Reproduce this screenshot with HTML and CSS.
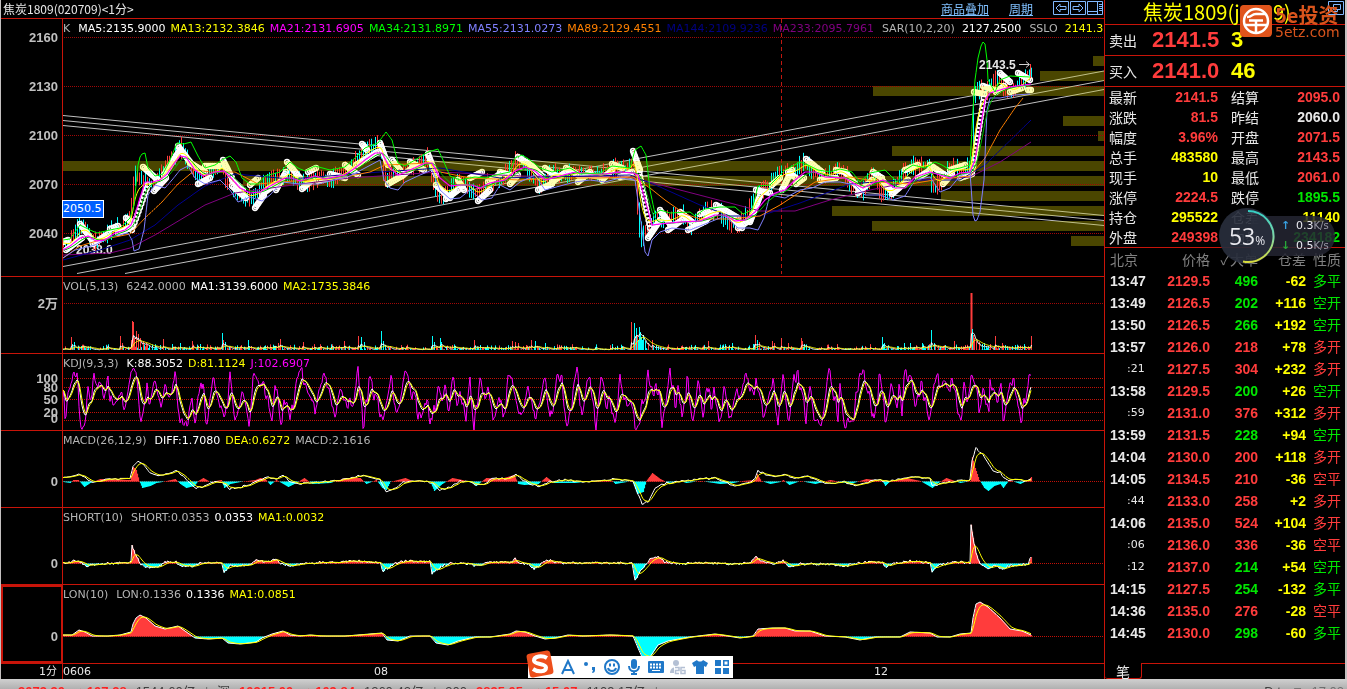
FILE: index.html
```html
<!DOCTYPE html>
<html lang="zh-CN">
<head>
    <meta charset="UTF-8">
    <meta name="viewport" content="width=device-width, initial-scale=1.0">
    <title>焦炭1809</title>
    <link rel="stylesheet" href="styles.css">
</head>
<body>
    <main class="app">
        <section class="charts">
            <header class="topbar">
                <h1>焦炭1809(020709)&lt;1分&gt;</h1>
                <nav>
                    <a href="#">商品叠加</a>
                    <a href="#">周期</a>
                    <div class="winbtns">
                        <button aria-label="左移"><svg viewBox="0 0 16 14"><path d="M.5.5h15v13H.5zM3 7l4-4v2.500h6v3H7V11z"/></svg></button>
                        <button aria-label="右移"><svg viewBox="0 0 16 14"><path d="M.5.5h15v13H.5zM13 7L9 3v2.500H3v3h6V11z"/></svg></button>
                        <button aria-label="布局"><svg viewBox="0 0 16 14"><path d="M.5.5h15v13H.5zM.5 10.500h10M10.500.5v13M12 3.500h3M12 5.500h3M12 7.500h3M12 9.500h3"/></svg></button>
                    </div>
                </nav>
            </header>

            <div class="panel main">
                <svg class="axis" id="axis-k"></svg>
                <div class="plot">
                    <svg id="k" viewBox="63 19 1041 257" preserveAspectRatio="none"></svg>
                    <p class="legend"><span class="gray k">K</span><span>MA5:2135.9000</span><span class="yellow">MA13:2132.3846</span><span class="magenta">MA21:2131.6905</span><span class="green">MA34:2131.8971</span><span class="blue">MA55:2131.0273</span><span class="orange">MA89:2129.4551</span><span class="navy">MA144:2109.9236</span><span class="purple">MA233:2095.7961</span><span class="gray sp">SAR(10,2,20)</span><span>2127.2500</span><span class="gray sp">SSLO</span><span class="yellow">2141.3</span></p>
                </div>
                <span class="cursor-price">2050.5</span>
            </div>

            <div class="panel">
                <svg class="axis" id="axis-vol"></svg>
                <div class="plot">
                    <svg id="vol" viewBox="63 277 1041 76" preserveAspectRatio="none"></svg>
                    <p class="legend"><span class="gray">VOL(5,13)</span><span class="gray">6242.0000</span><span>MA1:3139.6000</span><span class="yellow">MA2:1735.3846</span></p>
                </div>
            </div>

            <div class="panel">
                <svg class="axis" id="axis-kdj"></svg>
                <div class="plot">
                    <svg id="kdj" viewBox="63 354 1041 76" preserveAspectRatio="none"></svg>
                    <p class="legend"><span class="gray">KDJ(9,3,3)</span><span>K:88.3052</span><span class="yellow">D:81.1124</span><span class="magenta">J:102.6907</span></p>
                </div>
            </div>

            <div class="panel">
                <svg class="axis" id="axis-macd"></svg>
                <div class="plot">
                    <svg id="macd" viewBox="63 431 1041 76" preserveAspectRatio="none"></svg>
                    <p class="legend"><span class="gray">MACD(26,12,9)</span><span>DIFF:1.7080</span><span class="yellow">DEA:0.6272</span><span class="gray">MACD:2.1616</span></p>
                </div>
            </div>

            <div class="panel">
                <svg class="axis" id="axis-short"></svg>
                <div class="plot">
                    <svg id="short" viewBox="63 508 1041 76" preserveAspectRatio="none"></svg>
                    <p class="legend"><span class="gray">SHORT(10)</span><span class="gray">SHORT:0.0353</span><span>0.0353</span><span class="yellow">MA1:0.0032</span></p>
                </div>
            </div>

            <div class="panel selected">
                <svg class="axis" id="axis-lon"></svg>
                <div class="plot">
                    <svg id="lon" viewBox="63 585 1041 78" preserveAspectRatio="none"></svg>
                    <p class="legend"><span class="gray">LON(10)</span><span class="gray">LON:0.1336</span><span>0.1336</span><span class="yellow">MA1:0.0851</span></p>
                </div>
            </div>

            <div class="timeline">
                <span class="period">1分</span>
                <div class="days"><span>0606</span><span>08</span><span>12</span></div>
            </div>

            <div class="ime">
                <svg class="sogou" viewBox="0 0 28 28"><rect x="2" y="2" width="24" height="24" rx="3" fill="#ee4f1c" transform="rotate(-10 14 14)"/><path d="M21 8C16 5 8 6 8 10.500s12 2.500 12 7-8 5-13 1.500" fill="none" stroke="#fff" stroke-width="4"/></svg>
                <button aria-label="英文"><svg viewBox="0 0 16 16"><path d="M2 15L8 2l6 13M4.500 11h7" class="line"/></svg></button>
                <button aria-label="标点"><svg viewBox="0 0 16 16"><circle cx="4" cy="5" r="2"/><path d="M10 8h3v3c0 2-1 3-3 3l1-3h-1z"/></svg></button>
                <button aria-label="表情"><svg viewBox="0 0 16 16"><circle cx="8" cy="8" r="7" class="line"/><path d="M4 9c1 4 7 4 8 0M6 4.500v3M10 4.500v3" class="line"/></svg></button>
                <button aria-label="语音"><svg viewBox="0 0 16 16"><rect x="5" y="0" width="6" height="10" rx="3"/><path d="M3 7c0 7 10 7 10 0M8 12v3M5 15h6" class="line"/></svg></button>
                <button aria-label="键盘"><svg viewBox="0 0 16 16"><rect x="0" y="2" width="16" height="12" rx="1"/><path d="M2 5.500h12M2 8.500h12" stroke="#fff" stroke-width="2" stroke-dasharray="2 1"/><path d="M4 11.500h8" stroke="#fff" stroke-width="1"/></svg></button>
                <button aria-label="皮肤账号" class="off"><svg viewBox="0 0 16 16"><circle cx="6" cy="4" r="3"/><path d="M0 14c0-8 12-8 12 0z"/><path d="M4 7h12v9H4z" fill="#fff"/><path d="M5 8.500h4v3H5.500v3H9M15 8.500h-4v6h4v-3h-3" stroke="#b4c0d4" stroke-width="1.500" fill="none"/></svg></button>
                <button aria-label="换肤"><svg viewBox="0 0 16 16"><path d="M5 1c1 2 5 2 6 0l5 3-2 4-2-1v8H4V7L2 8 0 4z"/></svg></button>
                <button aria-label="工具箱"><svg viewBox="0 0 16 16"><path d="M1 1h6v6H1zM1 9h6v6H1zM9 9h6v6H9z"/><path d="M9.750 1.750h4.500v4.500h-4.500z" class="line thin"/></svg></button>
            </div>
        </section>

        <aside class="quote">
            <h2>焦炭1809(j1809)</h2>
            <div class="bidask"><span>卖出</span><b class="red">2141.5</b><b class="yellow">3</b></div>
            <div class="bidask"><span>买入</span><b class="red">2141.0</b><b class="yellow">46</b></div>

            <table class="stats">
                <tr><th>最新</th><td class="red">2141.5</td><th>结算</th><td class="red">2095.0</td></tr>
                <tr><th>涨跌</th><td class="red">81.5</td><th>昨结</th><td>2060.0</td></tr>
                <tr><th>幅度</th><td class="red">3.96%</td><th>开盘</th><td class="red">2071.5</td></tr>
                <tr><th>总手</th><td class="yellow">483580</td><th>最高</th><td class="red">2143.5</td></tr>
                <tr><th>现手</th><td class="yellow">10</td><th>最低</th><td class="red">2061.0</td></tr>
                <tr><th>涨停</th><td class="red">2224.5</td><th>跌停</th><td class="lime">1895.5</td></tr>
                <tr><th>持仓</th><td class="yellow">295522</td><th>仓差</th><td class="yellow">11140</td></tr>
                <tr><th>外盘</th><td class="red">249398</td><th>内盘</th><td class="lime">234182</td></tr>
            </table>

            <table class="ticks">
                <thead>
                    <tr><th>北京</th><th>价格</th><th>✓大单</th><th>仓差</th><th>性质</th></tr>
                </thead>
                <tbody>
                    <tr><td>13:47</td><td>2129.5</td><td class="lime">496</td><td>-62</td><td class="lime">多平</td></tr>
                    <tr><td>13:49</td><td>2126.5</td><td class="lime">202</td><td>+116</td><td class="lime">空开</td></tr>
                    <tr><td>13:50</td><td>2126.5</td><td class="lime">266</td><td>+192</td><td class="lime">空开</td></tr>
                    <tr><td>13:57</td><td>2126.0</td><td class="red">218</td><td>+78</td><td class="red">多开</td></tr>
                    <tr><td class="sec">:21</td><td>2127.5</td><td class="red">304</td><td>+232</td><td class="red">多开</td></tr>
                    <tr><td>13:58</td><td>2129.5</td><td class="lime">200</td><td>+26</td><td class="lime">空开</td></tr>
                    <tr><td class="sec">:59</td><td>2131.0</td><td class="red">376</td><td>+312</td><td class="red">多开</td></tr>
                    <tr><td>13:59</td><td>2131.5</td><td class="lime">228</td><td>+94</td><td class="lime">空开</td></tr>
                    <tr><td>14:04</td><td>2130.0</td><td class="red">200</td><td>+118</td><td class="red">多开</td></tr>
                    <tr><td>14:05</td><td>2134.5</td><td class="red">210</td><td>-36</td><td class="red">空平</td></tr>
                    <tr><td class="sec">:44</td><td>2133.0</td><td class="red">258</td><td>+2</td><td class="red">多开</td></tr>
                    <tr><td>14:06</td><td>2135.0</td><td class="red">524</td><td>+104</td><td class="red">多开</td></tr>
                    <tr><td class="sec">:06</td><td>2136.0</td><td class="red">336</td><td>-36</td><td class="red">空平</td></tr>
                    <tr><td class="sec">:12</td><td>2137.0</td><td class="lime">214</td><td>+54</td><td class="lime">空开</td></tr>
                    <tr><td>14:15</td><td>2127.5</td><td class="lime">254</td><td>-132</td><td class="lime">多平</td></tr>
                    <tr><td>14:36</td><td>2135.0</td><td class="red">276</td><td>-28</td><td class="red">空平</td></tr>
                    <tr><td>14:45</td><td>2130.0</td><td class="lime">298</td><td>-60</td><td class="lime">多平</td></tr>
                </tbody>
            </table>
            <div class="tabs"><button>笔</button><i></i></div>

            <button class="restore" aria-label="还原"><svg viewBox="0 0 16 14"><path d="M.5.5h15v13H.5zM5.500 3.500h7v5h-7zM5.500 6.500h-3v4h7v-2"/></svg></button>
            <div class="brand">
                <svg viewBox="0 0 32 32"><rect width="32" height="32" rx="4" fill="#e0541b"/><g fill="none" stroke="#fff" stroke-width="2.500"><circle cx="16" cy="16" r="12"/><path d="M7 12c6 0 4-3 9-3h9M9 15.500h14M16 15v12M5 20h22"/></g></svg>
                <p><strong>5e投资</strong><small>5etz.com</small></p>
            </div>
            <div class="meter">
                <div class="speed">
                    <span><i class="up">↑</i>0.3<small>K/s</small></span>
                    <span><i class="down">↓</i>0.5<small>K/s</small></span>
                </div>
                <div class="ball">
                    <svg viewBox="0 0 56 56">
                        <defs><linearGradient id="ring" x1="0" y1="0" x2="0" y2="1"><stop offset="0" stop-color="#35cfc4"/><stop offset=".5" stop-color="#7fd8a8"/><stop offset="1" stop-color="#d8dc3c"/></linearGradient></defs>
                        <path d="M29 3A25.500 25.500 0 1 1 24 53.500" fill="none" stroke="url(#ring)" stroke-width="2"/>
                    </svg>
                    <span>53<small>%</small></span>
                </div>
            </div>
        </aside>
    </main>

    <footer class="indexbar">
        <p><b>3073.30</b><b>▲107.28</b><span>1544.60亿</span><i>|</i><span>深</span><b>10315.00</b><b>▲109.84</b><span>1260.42亿</span><i>|</i><span>300</span><b>3835.05</b><b>▲15.07</b><span>1109.17亿</span><i>|</i></p>
        <p><span>D.t.</span><span>⧗</span><time>17:03</time></p>
    </footer>
    <script src="chart.js"></script>
</body>
</html>
```
FILE: styles.css
```css
* {
    box-sizing: border-box;
}
body {
    margin: 0;
    height: 100vh;
    display: flex;
    flex-direction: column;
    overflow: hidden;
    background: #c4c0c0;
    color: #e8e8e8;
    font: 12px/18px "DejaVu Sans", "Noto Sans CJK SC", sans-serif;
}
h1, h2, p {
    margin: 0;
    font-weight: normal;
}
button {
    padding: 0;
    border: 0;
    background: none;
    color: inherit;
    font: inherit;
    cursor: pointer;
}
svg {
    display: block;
}

.gray { color: #b4b4b4; }
.yellow { color: #ffff00; }
.magenta { color: #ff00ff; }
.green { color: #00ff00; }
.lime { color: #00e600; }
.blue { color: #8080ff; }
.orange { color: #ff8000; }
.navy { color: #000080; }
.purple { color: #800080; }
.red { color: #ff3c3c; }

.app {
    display: flex;
    flex: none;
    margin: 0 2px 0 1px;
    background: #000;
}

/* left side: stacked charts */
.charts {
    position: relative;
    flex: 1;
    min-width: 0;
    border-right: 1px solid #c81409;
}
.topbar {
    display: flex;
    justify-content: space-between;
    height: 19px;
    border-bottom: 1px solid #c81409;
    font-family: "Noto Sans CJK SC", sans-serif;
}
.topbar h1 {
    padding-left: 2px;
    font-size: 12px;
    line-height: 17px;
}
.topbar nav {
    display: flex;
    gap: 20px;
    padding-right: 1px;
    line-height: 17px;
}
.topbar a {
    color: #80c0ff;
}
.winbtns {
    display: flex;
    gap: 1px;
    padding: 1px 0;
}
.winbtns button, .restore {
    width: 16px;
    height: 14px;
}
.winbtns path, .restore path {
    fill: none;
    stroke: #80b8ff;
}

.panel {
    position: relative;
    display: flex;
    height: 77px;
    border-bottom: 1px solid #c81409;
}
.panel.main {
    height: 258px;
}
.panel.selected {
    height: 79px;
}
.axis {
    flex: none;
    width: 62px;
    height: 100%;
    border-right: 1px solid #c81409;
    fill: #c0c0c0;
    font: bold 13px "Liberation Sans", "Noto Sans CJK SC", sans-serif;
}
.selected .axis {
    outline: 2px solid #c81409;
    outline-offset: -2px;
}
.plot {
    position: relative;
    flex: 1;
    min-width: 0;
    overflow: hidden;
}
.plot svg {
    width: 100%;
    height: 100%;
}
.plot text {
    fill: #e8e8e8;
    font: bold 12px "Liberation Sans", sans-serif;
}
.legend {
    position: absolute;
    top: 0;
    left: 0;
    display: flex;
    gap: 5px;
    color: #fff;
    font-size: 11px;
    line-height: 19px;
    white-space: nowrap;
}
.legend span:first-child {
    padding-right: 3px;
}
.legend .sp {
    padding: 0 2px 0 3px;
}
.cursor-price {
    position: absolute;
    top: 181px;
    left: 61px;
    padding-right: 1px;
    border: 1px solid #fff;
    background: #0060ff;
    color: #fff;
    font-size: 11px;
    line-height: 16px;
}
.timeline {
    display: flex;
    height: 15px;
    font-size: 11px;
    line-height: 15px;
}
.period {
    width: 62px;
    padding-right: 5px;
    border-right: 1px solid #c81409;
    text-align: right;
}
.days {
    flex: 1;
    display: grid;
    grid-template-columns: 311fr 500fr 230fr;
}

/* input method bar */
.ime {
    position: absolute;
    bottom: 1px;
    left: 527px;
    display: flex;
    align-items: center;
    gap: 6px;
    height: 22px;
    padding-right: 3px;
    background: #fff;
}
.ime .sogou {
    width: 28px;
    height: 28px;
    margin: -6px 0 0 -2px;
    flex: none;
}
.ime button {
    width: 16px;
    height: 16px;
}
.ime button svg {
    width: 16px;
    height: 16px;
    fill: #2078c8;
}
.ime .line {
    fill: none;
    stroke: #2078c8;
    stroke-width: 2;
}
.ime .thin {
    stroke-width: 1.5;
}
.ime .off svg {
    fill: #b4c0d4;
}

/* right side: quote board */
.quote {
    position: relative;
    display: flex;
    flex-direction: column;
    flex: none;
    width: 240px;
    font-family: "Noto Sans CJK SC", sans-serif;
    font-size: 14px;
}
.quote h2 {
    height: 25px;
    padding-left: 38px;
    border-bottom: 1px solid #c81409;
    color: #ffff00;
    font-size: 20px;
    line-height: 24px;
}
.bidask {
    display: grid;
    grid-template-columns: 43px 79px 1fr;
    padding-left: 4px;
    border-bottom: 1px solid #c81409;
    line-height: 30px;
}
.bidask b {
    font: bold 22px/30px "Liberation Sans", sans-serif;
}
table {
    width: 100%;
    border-collapse: collapse;
    table-layout: fixed;
}
th {
    padding: 0;
    font-weight: normal;
    text-align: left;
}
td {
    padding: 0;
    text-align: right;
    font-family: "Liberation Sans", "Noto Sans CJK SC", sans-serif;
    font-weight: bold;
}
.stats {
    border-bottom: 1px solid #c81409;
    line-height: 20px;
}
.stats th:nth-child(1) { width: 36px; padding-left: 4px; }
.stats td:nth-child(2) { width: 77px; }
.stats th:nth-child(3) { width: 55px; padding-left: 13px; }
.stats td:nth-child(4) { padding-right: 5px; }

.ticks {
    line-height: 22px;
}
.ticks th {
    color: #808080;
    text-align: right;
    white-space: nowrap;
}
.ticks th:nth-child(1) { width: 45px; padding-left: 5px; text-align: left; }
.ticks th:nth-child(2) { width: 60px; }
.ticks th:nth-child(3) { width: 48px; }
.ticks th:nth-child(4) { width: 48px; }
.ticks td:nth-child(1) { padding-left: 5px; text-align: left; }
.ticks td:nth-child(2) { color: #ff3c3c; }
.ticks td:nth-child(4) { color: #ffff00; }
.ticks th:nth-child(5), .ticks td:nth-child(5) { padding-right: 4px; font-weight: normal; }
.ticks td.sec {
    padding-left: 22px;
    font: 11px/22px "DejaVu Sans", sans-serif;
}
.tabs {
    display: flex;
    height: 16px;
    margin-top: auto;
}
.tabs button {
    width: 37px;
    border: 1px solid #c81409;
    border-width: 0 1px 1px 0;
    border-radius: 0 0 3px 3px;
    line-height: 14px;
}
.tabs i {
    flex: 1;
    border-top: 1px solid #c81409;
}
.restore {
    position: absolute;
    top: 1px;
    right: 1px;
}
.brand {
    position: absolute;
    top: 5px;
    right: 4px;
    display: flex;
    gap: 3px;
    color: #d8541c;
}
.brand > svg {
    width: 32px;
    height: 32px;
}
.brand p {
    display: flex;
    flex-direction: column;
    width: 66px;
    white-space: nowrap;
}
.brand strong {
    font: bold 20px/20px "Noto Sans CJK SC", sans-serif;
}
.brand small {
    font: 14px/14px "DejaVu Sans", sans-serif;
}

/* network meter that floats over the board */
.meter {
    position: absolute;
    top: 208px;
    left: 114px;
    display: flex;
    align-items: center;
    color: #e8e8ee;
}
.ball {
    position: relative;
    width: 56px;
    height: 56px;
    border-radius: 50%;
    background: rgba(40, 46, 60, .92);
    font: 23px/56px "Open Sans", sans-serif;
    text-align: center;
}
.ball svg {
    position: absolute;
    inset: 0;
}
.ball small {
    font-size: 12px;
}
.speed {
    order: 1;
    width: 84px;
    margin-left: -24px;
    padding-left: 30px;
    border-radius: 0 20px 20px 0;
    background: rgba(36, 38, 50, .85);
    font: 11px/20px "DejaVu Sans", sans-serif;
}
.speed span {
    display: flex;
    white-space: nowrap;
}
.speed i {
    width: 15px;
    font-style: normal;
    font-weight: bold;
}
.speed small {
    color: #9a9aa6;
    font-size: 10px;
}
.speed .up { color: #38a0e0; }
.speed .down { color: #28a838; }

/* index strip */
.indexbar {
    display: flex;
    flex: 1;
    justify-content: space-between;
    min-height: 0;
    padding: 4px 3px 0 18px;
    overflow: hidden;
    background: linear-gradient(#d0d0d0, #b0b0b0);
    color: #404040;
    font: bold 13px/18px "Liberation Sans", "Noto Sans CJK SC", sans-serif;
}
.indexbar p {
    display: flex;
    gap: 9px;
}
.indexbar b {
    color: #ff2020;
}
.indexbar i, .indexbar time {
    color: #707070;
    font-weight: normal;
}
```
FILE: chart.js
```js
const RED = '#ff3c3c', CYAN = '#00ffff', WHITE = '#ffffff', YELLOW = '#ffff00';

function add(id, tag, attrs, text) {
    const el = document.createElementNS('http://www.w3.org/2000/svg', tag);
    for (const k in attrs) el.setAttribute(k, attrs[k]);
    if (text) el.textContent = text;
    document.getElementById(id).appendChild(el);
    return el;
}

// small seeded generator so the charts look the same on every load
let seed = 7;
function rnd() {
    seed = (seed * 16807) % 2147483647;
    return seed / 2147483647;
}

// "x,y x,y ..." -> one value for each bar
function series(str) {
    const p = str.trim().split(/\s+/).map(s => s.split(',').map(Number));
    const out = [];
    let i = 0;
    for (let x = p[0][0]; x <= p[p.length - 1][0]; x++) {
        while (i < p.length - 2 && p[i + 1][0] < x) i++;
        const t = (x - p[i][0]) / (p[i + 1][0] - p[i][0]);
        out.push([x, p[i][1] + (p[i + 1][1] - p[i][1]) * t]);
    }
    return out;
}

function ema(data, n) {
    let v = data[0][1];
    return data.map(([x, y]) => [x, v += (y - v) / n]);
}

// adds a jitter that holds for a few bars
function rough(data, size, hold) {
    let d = 0;
    return data.map(([x, y], i) => {
        if (i % hold === 0) d = (rnd() - .5) * size;
        return [x, y + d];
    });
}

function line(id, data, color, width) {
    add(id, 'polyline', {
        points: data.map(([x, y]) => x + ',' + y.toFixed(1)).join(' '),
        fill: 'none', stroke: color, 'stroke-width': width || 1
    });
}

function grid(id, ys, color) {
    ys.forEach(y => add(id, 'path', { d: `M64 ${y}H1104`, stroke: color || '#a00808', 'stroke-dasharray': '1 1' }));
}

function labels(id, top, rows) {
    rows.forEach(([text, y]) => add(id, 'text', { x: 57, y: y - top + 4, 'text-anchor': 'end' }, text));
}

function bars(id, data, zero) {
    data.forEach(([x, y]) => {
        add(id, 'path', { d: `M${x + .5} ${zero}V${y}`, stroke: y < zero ? RED : CYAN, 'stroke-width': 1.2 });
    });
}

// ---- K line ----
const bands = [[56, 1093], [71, 1040], [86, 873], [116, 1063], [131, 1098], [146, 892], [161, 63],
    [176, 243], [191, 941], [206, 832], [221, 872], [236, 1071]];
bands.forEach(([y, x]) => add('k', 'rect', { x, y, width: 1104 - x, height: 10, fill: '#4a4600' }));
grid('k', [37.5, 86.5, 135.5, 184.5, 233.5]);
add('k', 'path', { d: 'M781.5 19V274', stroke: '#c01810', 'stroke-dasharray': '4 3' });
[[63, 115.5, 215.5], [63, 120.5, 220.5], [63, 125.5, 225.5], [63, 266.5, 71], [77, 273.5, 80.5], [125, 273.5, 89.5]]
    .forEach(([x, y1, y2]) => add('k', 'path', { d: `M${x} ${y1}L1104 ${y2}`, stroke: '#c0c0c0' }));
add('k', 'text', { x: 76, y: 254 }, '2038.0');

const price = series(`63,243 68,245 75,232 80,224 86,232 93,244 100,238 112,229 121,226 130,218 132,185 134,172
140,180 148,184 156,180 164,168 172,158 179,146 186,160 195,176 203,178 213,170 222,165 224,180 232,186 240,195
250,198 258,190 265,182 275,180 283,175 288,170 293,180 302,184 315,177 327,180 343,172 352,162 360,152 368,148
376,145 381,150 384,182 392,172 402,174 415,165 428,158 432,180 438,196 448,192 458,180 470,190 476,196 485,185
500,178 512,168 516,158 525,166 533,182 540,186 550,172 562,176 578,172 600,176 615,166 628,170 633,155 635,180
638,225 641,238 648,225 656,218 665,222 680,213 690,226 705,212 718,210 727,222 736,225 748,212 756,190 765,188
778,172 790,172 804,162 812,172 825,176 840,170 852,186 860,192 872,172 881,195 892,190 905,170 915,165 928,165
932,190 940,180 950,168 965,170 971,165 972,110 974,88 985,90 997,78 1003,88 1012,92 1020,82 1031,72`);
price.forEach(([x, y], i) => {
    if (i % 2) return;
    const h = 5 + rnd() * 14;
    const prev = i > 1 ? price[i - 2][1] : y;
    const shift = (rnd() - .5) * 4;
    const top = Math.min(y, prev) - h / 2 + shift, bottom = Math.max(y, prev) + h / 2 + shift;
    add('k', 'path', { d: `M${x + .5} ${top.toFixed(1)}V${bottom.toFixed(1)}`, stroke: rnd() < .5 ? RED : CYAN });
});

// parabolic SAR: one chain of small rings for each leg
const sar = `63,242,68,240 66,250,82,238 80,224,92,240 93,244,108,234 110,229,118,226 118,233,132,227 126,218,132,222
132,230,148,185 143,167,158,180 154,191,166,178 164,175,180,150 178,146,190,162 190,163,205,172 198,184,210,178
205,166,222,166 223,160,232,178 232,186,246,198 232,180,243,190 250,185,258,178 255,208,264,195 262,194,276,184
276,190,286,172 287,162,300,178 302,189,312,180 308,172,316,168 318,181,330,178 330,174,345,178 345,165,358,175
356,165,378,152 362,144,367,150 380,143,388,165 388,184,402,176 392,160,400,170 402,176,416,165 410,162,424,170
428,154,436,175 436,185,450,198 446,199,458,190 458,180,464,190 470,178,482,172 478,201,490,190 488,182,500,174
500,172,510,175 510,184,518,175 518,157,532,166 532,166,542,176 538,190,552,184 545,168,556,176 552,182,566,172
566,168,578,175 578,182,590,172 590,175,602,177 602,180,612,170 612,164,622,168 620,177,632,172 633,151,640,170
638,165,650,228 648,238,660,220 660,210,670,224 668,230,682,220 680,212,692,222 688,230,706,221 700,214,712,210
704,221,716,212 716,205,738,218 730,215,742,228 738,228,750,220 750,222,760,196 756,190,770,193 772,185,780,178
782,190,792,170 788,172,796,178 796,184,804,178 806,159,822,172 820,180,836,178 836,170,845,172 845,172,860,190
858,193,872,180 873,172,882,178 882,180,892,192 892,194,908,180 905,170,918,165 918,178,930,170 930,165,945,175
943,184,952,174 950,170,965,165 960,178,972,174 972,174,985,90 974,92,984,94 983,86,994,90 996,92,1004,86
1000,73,1010,82 1010,92,1022,88 1018,73,1030,80 1028,90,1031,90`;
sar.split(/\s+/).forEach(s => {
    const [x1, y1, x2, y2] = s.split(',').map(Number);
    const n = Math.max(1, Math.round(Math.hypot(x2 - x1, y2 - y1) / (Math.abs(y2 - y1) > 40 ? 4 : 2)));
    for (let i = 0; i <= n; i++) {
        add('k', 'circle', {
            cx: x1 + (x2 - x1) * i / n, cy: y1 + (y2 - y1) * i / n, r: 2.4,
            fill: 'none', stroke: WHITE, 'stroke-width': 1.5
        });
    }
});
// rings turn cream where they cross a volume band
bands.forEach(([y, x]) => add('k', 'rect', { x, y, width: 1104 - x, height: 10, fill: '#ffffb4', style: 'mix-blend-mode:multiply' }));

line('k', series(`63,255 110,253 130,248 155,235 180,220 205,205 235,193 300,184 350,178 440,172 520,176 630,177
680,190 730,203 760,211 795,211 830,200 870,190 920,180 970,177 1000,162 1031,142`), '#800080');
line('k', series(`63,260 100,250 130,240 155,225 178,205 205,186 235,174 290,179 380,172 440,168 500,178 630,175
660,187 700,205 730,216 760,216 800,203 850,184 900,180 960,180 985,165 1031,120`), '#000090');
line('k', series(`63,258 80,246 100,240 130,234 145,218 162,202 178,184 195,170 210,172 235,172 258,184 280,182
310,180 340,178 370,172 385,165 430,163 440,172 470,178 520,180 560,178 600,178 633,177 650,188 665,200 685,214
700,219 730,219 760,216 780,205 800,192 815,182 850,177 880,182 910,184 940,179 970,176 985,158 1000,130 1015,108
1023,98`), '#ff8000');
line('k', series(`63,258 75,250 95,245 110,237 128,233 132,240 134,251 139,249 144,230 148,195 155,185 165,188
172,180 180,170 188,166 195,178 205,184 220,180 230,190 238,202 250,197 262,201 270,195 282,182 300,184 318,184
330,181 350,176 365,168 380,160 384,180 390,188 398,190 405,182 420,175 432,170 440,190 450,199 460,198 470,190
482,200 492,198 500,185 510,190 520,182 535,175 545,190 560,186 575,182 590,180 605,182 620,178 635,180 640,215
645,252 648,256 652,240 660,232 672,228 690,230 710,222 725,216 738,228 750,228 758,230 764,218 770,195 785,198
800,190 812,188 825,182 840,182 855,185 865,195 880,195 893,200 905,196 915,180 930,177 940,192 950,188 960,176
970,172 972,200 973,215 975,221 977,220 980,212 984,180 987,110 990,98 1000,98 1015,95 1030,94`), '#8080ff');
line('k', ema(price, 7), YELLOW);
const ma21 = series(`63,250 70,246 80,238 88,236 96,241 105,240 115,233 125,230 131,225 135,215 140,198 145,182
152,182 160,180 167,174 173,165 180,156 186,157 195,170 203,176 215,172 224,171 232,179 240,188 250,193 260,192
270,186 285,178 292,178 300,181 315,176 325,179 345,175 355,168 365,160 375,153 382,153 390,168 398,175 410,170
425,163 432,163 440,178 450,186 460,185 472,185 480,188 490,183 505,180 515,171 525,167 535,171 545,180 560,176
575,172 590,174 605,174 620,172 633,173 638,175 645,200 652,225 660,224 680,222 700,221 715,215 725,215 735,221
745,220 755,212 765,200 775,193 785,190 795,180 805,172 815,172 825,177 845,178 855,184 863,188 875,182 883,180
895,188 905,188 915,177 930,172 940,175 950,178 960,173 970,172 975,160 980,130 985,100 990,93 1000,90 1010,87
1031,84`);
line('k', ema(ma21, 5), '#00c000');
line('k', ma21, '#ff00ff', 1.2);
line('k', series(`63,240 70,239 80,225 90,230 97,233 110,230 120,228 130,218 134,205 138,165 140,157 142,154 145,153
148,168 155,176 163,174 170,160 177,143 184,144 191,142 198,156 205,168 215,165 222,160 230,156 236,162 242,178
250,184 258,184 265,176 280,172 290,162 298,168 305,171 315,166 330,170 345,167 355,158 365,148 378,143 386,132
392,140 398,163 405,166 415,160 428,152 438,149 443,160 450,176 460,180 475,177 485,178 500,174 510,172 515,158
522,155 530,160 540,168 552,172 570,168 580,174 600,173 612,166 630,168 635,150 641,146 646,155 650,190 655,214
660,210 670,213 690,212 695,216 705,209 720,207 735,207 743,214 752,210 758,186 770,185 785,170 800,162 808,165
818,170 830,172 840,169 852,172 860,182 870,173 885,170 897,182 905,170 913,165 925,168 935,162 942,165 950,170
960,168 970,165 973,110 975,80 978,58 981,46 983,42 985,44 987,60 988,80 995,92 1000,80 1010,76 1030,77`), '#00ff00');
add('k', 'text', { x: 979, y: 69 }, '2143.5');
add('k', 'path', { d: 'M1019 64.500H1029M1026 61.500L1029.500 64.500L1026 67.500', stroke: '#d0d0d0', fill: 'none' });
add('k', 'path', { d: 'M1030.500 64V78', stroke: RED });

// ---- VOL ----
grid('vol', [303.5]);
const vol = [];
for (let x = 63; x <= 1031; x++) vol.push([x + .5, 350 - Math.pow(rnd(), 3) * 6]);
`71,337 72,344 74,342 120,336 122,343 131,340 132,321 133,322 134,338 136,331 138,334 140,338 143,341 146,343 163,339 172,344
180,343 192,341 200,344 222,333 223,340 225,342 248,340 280,339 278,343 303,342 344,341 358,336 361,337 364,342 381,331
383,341 432,336 434,342 440,338 441,342 474,340 480,345 512,341 515,342 518,343 531,340 535,341 545,343 612,344
631,322 633,343 634,323 635,336 636,328 637,335 638,340 639,327 640,332 641,337 642,340 643,335 645,341 648,343 652,340
656,345 708,341 732,343 753,344 755,335 757,340 759,342 772,341 774,343 781,338 788,343 801,338 802,341 804,344 882,337
884,343 904,343 910,343 922,343 931,330 934,343 954,341 971,293 972,329 973,335 974,338 976,341 979,342 982,344
984,343 995,336 1002,343 1005,345 1015,345 1031,336`.split(/\s+/).forEach(s => {
    const [x, y] = s.split(',').map(Number);
    vol[x - 63][1] = y;
});
const up = [71, 120, 131, 132, 133, 163, 280, 358, 474, 531, 631, 652, 708, 755, 781, 931 + 23, 971, 974, 995, 1031];
const down = [222, 248, 381, 432, 440, 634, 636, 638, 639, 640, 642, 643, 882, 931];
vol.forEach(([x, y]) => {
    const bar = x - .5;
    const color = up.includes(bar) ? RED : down.includes(bar) || rnd() < .5 ? CYAN : RED;
    add('vol', 'path', { d: `M${x} 350V${y.toFixed(1)}`, stroke: color, 'stroke-width': y < 300 ? 2 : 1 });
});
line('vol', ema(vol, 4), WHITE);
line('vol', ema(ema(vol, 5), 5), YELLOW);

// ---- KDJ ----
grid('kdj', [378.5, 387.5, 399.5, 412.5, 420.5], '#c01008');
const j = ema(rough(series(`63,399 65,418 68,390 72,382 77,380 79,412 80,422 84,422 88,384 90,400 95,375 100,385 104,392 108,381
112,408 118,396 124,404 130,374 137,380 141,427 147,383 149,412 155,385 160,408 164,379 167,392 175,377 180,425
186,422 192,398 195,418 201,374 207,427 213,376 219,395 225,424 230,378 235,423 242,384 249,426 253,376 260,384
268,400 272,412 275,373 280,422 286,396 290,424 296,378 304,377 311,400 315,418 318,385 328,379 334,422 341,385
347,404 352,403 358,371 363,427 369,378 374,392 382,423 390,375 396,420 405,378 414,400 420,418 424,396 432,425
438,383 442,411 445,380 449,412 453,380 457,402 460,386 466,420 470,382 474,427 480,378 483,405 488,384 493,421
499,387 503,419 508,381 512,377 519,420 529,388 533,416 540,404 545,380 552,424 557,371 562,382 566,424 570,408
577,373 582,424 587,385 590,386 596,424 601,377 607,410 609,388 614,422 620,377 627,404 630,396 635,424 641,410
648,377 651,390 658,386 662,428 670,375 675,405 679,384 682,428 687,380 693,427 699,378 703,420 707,383 711,408
714,390 719,424 725,386 729,423 737,382 739,400 743,382 748,383 754,404 756,380 763,418 768,395 773,377 778,425
783,375 788,424 794,374 800,382 806,418 811,383 814,420 821,424 829,374 838,416 840,387 845,426 854,410 856,385
863,376 869,392 874,427 879,377 885,418 891,382 896,412 899,381 902,419 904,375 911,386 915,405 921,383 929,420
936,380 945,380 952,384 960,420 965,381 967,402 971,377 977,397 979,414 982,383 989,419 990,376 997,398 1001,388
1003,425 1010,373 1016,387 1020,422 1024,403 1029,372 1031,378`), 20, 2), 1.3);
line('kdj', j, '#ff00ff');
line('kdj', ema(j, 5), WHITE);
line('kdj', ema(ema(j, 5), 2), YELLOW);

// ---- MACD ----
grid('macd', [481.5], '#c01008');
bars('macd', series(`63,482 70,483 73,480 78,480 84,487 90,483 100,479 130,480 133,467 136,470 139,481 142,488 150,486
156,483 162,482 175,479 180,484 186,488 194,486 198,481 203,478 210,482 221,480 224,488 230,484 240,482 255,480
260,478 265,479 270,485 276,480 288,487 296,483 304,478 312,484 330,483 345,478 360,478 366,484 376,480 382,488
386,490 390,482 405,478 412,481 430,482 434,491 442,484 452,478 462,480 472,483 476,486 482,481 486,478 500,479
514,475 518,484 524,485 538,484 546,477 554,483 575,483 590,481 612,481 615,484 632,481 637,494 643,492 646,481
652,473 660,479 668,483 680,481 686,483 700,481 720,484 733,483 742,481 755,480 757,474 761,481 770,484 780,482
783,480 789,485 800,481 815,484 830,480 850,484 866,479 882,481 885,486 890,481 906,478 920,481 932,488 938,483
946,478 960,483 970,481 972,457 975,468 979,480 984,488 988,491 994,486 1000,484 1003,488 1009,480 1020,484
1028,480 1031,477`), 481.5);
const diff = rough(series(`63,478 72,476 79,474 85,478 92,483 105,480 115,479 130,479 133,466 138,461 144,465 150,473
158,476 168,474 176,471 182,475 190,484 196,488 205,486 215,481 222,482 230,489 245,486 260,480 268,477 275,479
283,476 290,481 300,484 320,482 340,480 355,477 362,475 370,477 380,480 386,492 395,488 403,482 420,480 432,483
440,490 450,487 460,481 470,482 476,485 484,484 492,479 510,478 516,474 520,478 530,484 540,487 548,482 565,480
580,482 600,481 612,479 633,481 637,492 642,504 648,502 655,488 662,484 675,482 685,481 700,479 715,478 725,482
735,486 748,483 755,479 758,471 765,474 775,477 785,475 795,479 805,476 815,479 825,484 845,482 855,486 862,484
875,480 890,481 905,478 912,476 930,479 932,486 945,483 955,481 970,480 972,460 976,448 983,455 992,470 1000,473
1006,480 1018,479 1024,481 1031,479`), 1.6, 3);
line('macd', diff, WHITE);
line('macd', ema(diff, 4), YELLOW);

// ---- SHORT ----
grid('short', [563.5], '#c01008');
const short = rough(series(`63,563 71,562 73,560 80,562 86,566 96,564 120,563 131,562 132,545 136,556 141,564 146,568
160,566 165,562 176,562 182,566 195,566 200,563 222,563 224,572 230,566 250,565 256,560 266,562 277,559 280,563
290,566 310,563 358,561 380,563 383,571 390,566 400,562 410,561 430,562 432,573 440,567 450,563 470,564 475,566
490,562 512,562 515,559 520,563 530,565 534,569 540,565 546,560 560,563 632,563 635,581 640,571 645,566 650,558
658,557 665,562 680,564 700,563 740,564 750,563 756,556 760,561 775,564 783,560 789,567 800,564 830,564 845,566
866,562 883,563 885,567 892,564 910,561 930,563 932,571 938,565 957,562 970,563 971,524 973,538 976,552 980,564
988,569 996,565 1002,570 1008,566 1020,565 1028,564 1031,557`), 2.4, 1);
bars('short', short, 563.5);
line('short', short, WHITE);
line('short', ema(ema(short, 3), 3), YELLOW);

// ---- LON ----
grid('lon', [636.5], '#c01008');
const lon = series(`63,635 72,635 79,630 85,632 92,636 108,636 120,635 131,632 133,624 136,618 140,615 146,618 155,626
165,629 178,626 185,631 195,638 208,639 222,638 228,643 240,644 256,642 262,638 272,634 283,631 290,635 300,636
310,635 320,636 345,636 358,635 382,633 387,640 398,641 410,636 430,636 436,643 448,645 458,641 475,637 490,637
510,634 516,631 525,632 535,636 545,639 555,638 568,635 582,636 610,635 633,636 638,648 642,657 650,657 658,645
668,641 690,637 715,634 740,638 753,636 758,629 772,628 785,628 795,631 810,631 825,636 845,637 860,640 875,637
890,637 900,637 910,632 930,633 937,637 950,637 960,634 971,633 973,618 976,604 980,602 988,607 1000,618 1010,629
1022,631 1031,635`);
bars('lon', lon, 636.5);
line('lon', lon, WHITE);
line('lon', ema(lon, 4), YELLOW);

labels('axis-k', 19, [['2160', 38], ['2130', 87], ['2100', 136], ['2070', 185], ['2040', 234]]);
labels('axis-vol', 277, [['2万', 304]]);
labels('axis-kdj', 354, [['100', 379], ['80', 388], ['50', 400], ['20', 413], ['0', 419]]);
labels('axis-macd', 431, [['0', 482]]);
labels('axis-short', 508, [['0', 564]]);
labels('axis-lon', 585, [['0', 637]]);
```
